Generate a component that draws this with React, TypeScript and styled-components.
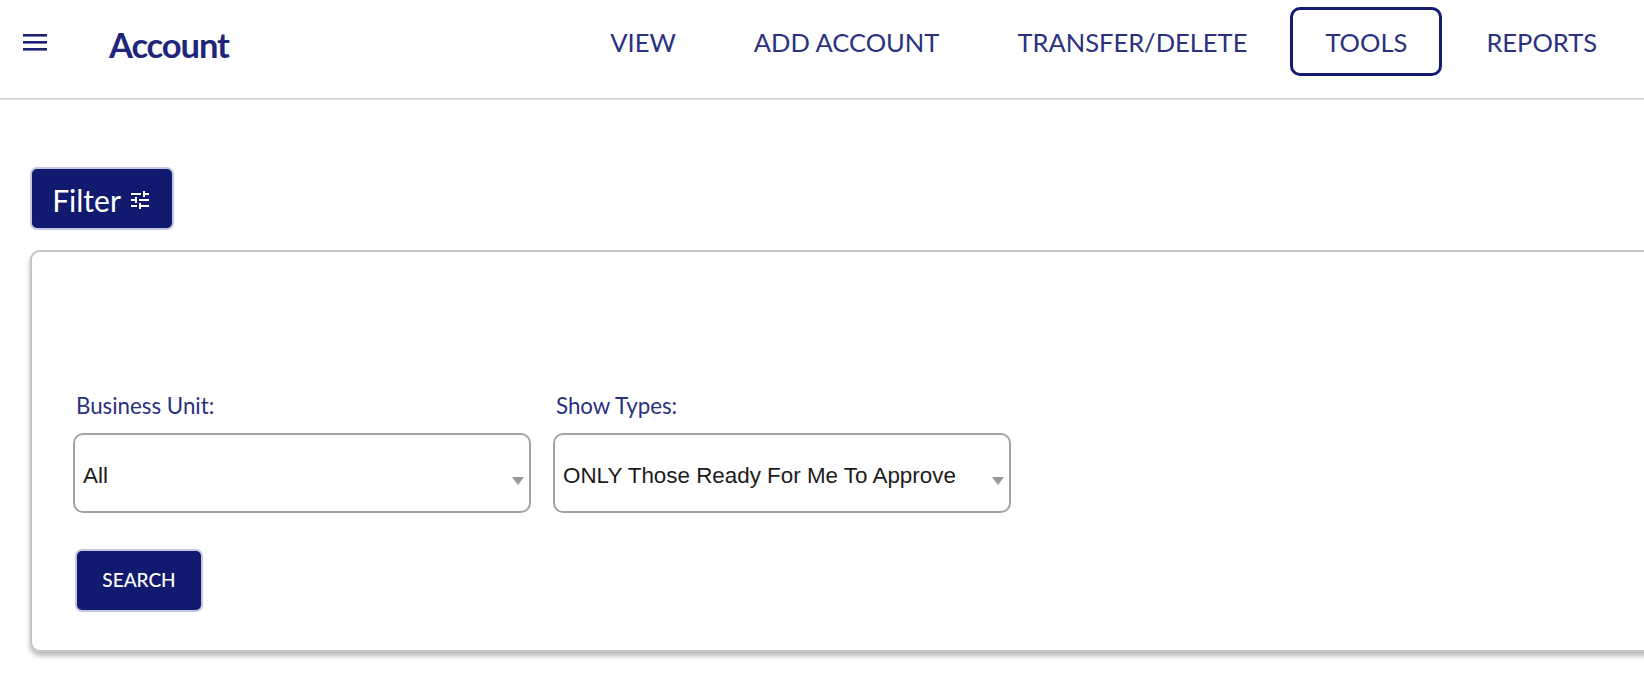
import React from "react";
import styled, { createGlobalStyle } from "styled-components";

const Global = createGlobalStyle`
  html, body { margin: 0; padding: 0; background: #fff; overflow: hidden; }
  body { font-family: Lato, "Liberation Sans", sans-serif; width: 1644px; height: 683px; }
`;

const Header = styled.header`
  display: flex;
  align-items: center;
  height: 98px;
  border-bottom: 2px solid #d9d9d9;
  padding: 0 0 0 22px;
  box-sizing: content-box;
`;

const MenuButton = styled.button`
  display: block;
  width: 26px;
  height: 20px;
  margin: -14px 0 0 0;
  padding: 0;
  border: 0;
  background: none;
  color: #1b2272;
`;

const Title = styled.h1`
  margin: -10px 0 0 61px;
  font-size: 34.5px;
  font-weight: 700;
  letter-spacing: -1.1px;
  color: #1f2679;
`;

const Nav = styled.nav`
  display: flex;
  align-items: center;
  margin-left: auto;
  margin-right: 8px;
  margin-top: -16px;
`;

const NavItem = styled.a<{ $active?: boolean }>`
  display: flex;
  align-items: center;
  justify-content: center;
  box-sizing: border-box;
  height: 69px;
  padding: 2px ${(p) => (p.$active ? 32 : 39)}px 0;
  margin: 0 ${(p) => (p.$active ? "5px 0 4px" : "0")};
  border: ${(p) => (p.$active ? "3px solid #141b73" : "0")};
  border-radius: 10px;
  font-size: 25.5px;
  font-weight: 400;
  color: #2a3180;
`;

const Main = styled.main`
  padding: 67px 0 0 30px;
`;

const ActionButton = styled.button<{ $large?: boolean }>`
  display: inline-flex;
  align-items: center;
  justify-content: center;
  box-sizing: border-box;
  height: 63px;
  width: ${(p) => (p.$large ? 144 : 128)}px;
  padding: ${(p) => (p.$large ? "2px 0 0" : "0 0 2px")};
  gap: 7px;
  border: 2px solid #c3c7df;
  border-radius: 7px;
  background: #121a70;
  color: #fff;
  font-family: Lato, sans-serif;
  font-size: ${(p) => (p.$large ? 30 : 19)}px;
  font-weight: ${(p) => (p.$large ? 400 : 500)};
`;

const Card = styled.section`
  box-sizing: border-box;
  width: 1700px;
  height: 402px;
  margin-top: 20px;
  padding: 138px 0 0 41px;
  border: 2px solid #c4c4c4;
  border-radius: 10px;
  box-shadow: 0 4px 5px rgba(0, 0, 0, 0.28);
`;

const Fields = styled.div`
  display: flex;
  gap: 22px;
`;

const Field = styled.div`
  width: 458px;
`;

const Label = styled.label`
  display: block;
  height: 43px;
  margin-left: 3px;
  padding-top: 1px;
  box-sizing: border-box;
  font-size: 22.3px;
  line-height: 30px;
  color: #2a3180;
`;

const Select = styled.div`
  position: relative;
  display: flex;
  align-items: center;
  box-sizing: border-box;
  height: 80px;
  padding: 6px 0 0 8px;
  border: 2px solid #a3a3a3;
  border-radius: 10px;
  font-family: "Liberation Sans", Arial, sans-serif;
  font-size: 22.4px;
  color: #1c1c1c;
`;

const Caret = styled.span`
  position: absolute;
  right: 5px;
  top: 42px;
  width: 0;
  height: 0;
  border-left: 6px solid transparent;
  border-right: 6px solid transparent;
  border-top: 8px solid #999;
`;

const SearchRow = styled.div`
  margin: 36px 0 0 2px;
`;

export default function App() {
  return (
    <>
      <Global />
      <Header>
        <MenuButton aria-label="Menu">
          <svg width="26" height="20" viewBox="0 0 26 20" fill="currentColor">
            <rect x="1" y="2" width="24" height="2.6" />
            <rect x="1" y="9" width="24" height="2.6" />
            <rect x="1" y="16" width="24" height="2.6" />
          </svg>
        </MenuButton>
        <Title>Account</Title>
        <Nav>
          <NavItem>VIEW</NavItem>
          <NavItem>ADD ACCOUNT</NavItem>
          <NavItem>TRANSFER/DELETE</NavItem>
          <NavItem $active>TOOLS</NavItem>
          <NavItem>REPORTS</NavItem>
        </Nav>
      </Header>
      <Main>
        <ActionButton $large>
          Filter
          <svg width="24" height="24" viewBox="0 0 24 24" fill="#fff">
            <path d="M3 17v2h6v-2H3zM3 5v2h10V5H3zm10 16v-2h8v-2h-8v-2h-2v6h2zM7 9v2H3v2h4v2h2V9H7zm14 4v-2H11v2h10zm-6-4h2V7h4V5h-4V3h-2v6z" />
          </svg>
        </ActionButton>
        <Card>
          <Fields>
            <Field>
              <Label>Business Unit:</Label>
              <Select>
                All
                <Caret />
              </Select>
            </Field>
            <Field>
              <Label>Show Types:</Label>
              <Select>
                ONLY Those Ready For Me To Approve
                <Caret />
              </Select>
            </Field>
          </Fields>
          <SearchRow>
            <ActionButton>SEARCH</ActionButton>
          </SearchRow>
        </Card>
      </Main>
    </>
  );
}
